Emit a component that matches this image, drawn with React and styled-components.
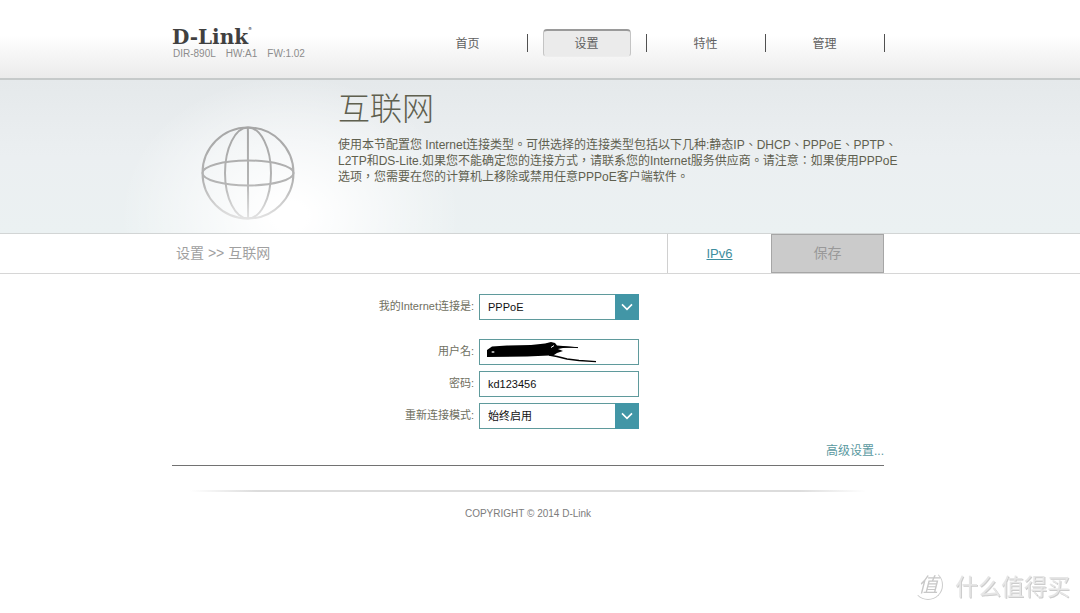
import { useState } from 'react'
import styled, { createGlobalStyle } from 'styled-components'

function Internet() {
  const [connection, setConnection] = useState('PPPoE')
  const [reconnect, setReconnect] = useState('始终启用')
  const [username, setUsername] = useState('')
  const [password, setPassword] = useState('kd123456')
  return (
    <>
      <GlobalStyle />
      <Header>
        <Inner>
          <HeaderRow>
            <Brand>
              <Logo href="#">
                D-Link<Reg>®</Reg>
              </Logo>
              <Version>
                <span>DIR-890L</span>
                <span>HW:A1</span>
                <span>FW:1.02</span>
              </Version>
            </Brand>
            <Nav>
              <NavItem>
                <NavLink href="#home">首页</NavLink>
              </NavItem>
              <NavItem>
                <NavLink href="#settings" $active>
                  设置
                </NavLink>
              </NavItem>
              <NavItem>
                <NavLink href="#features">特性</NavLink>
              </NavItem>
              <NavItem>
                <NavLink href="#management">管理</NavLink>
              </NavItem>
            </Nav>
          </HeaderRow>
        </Inner>
      </Header>
      <Hero>
        <Inner>
          <HeroRow>
            <GlobeBox>
              <Globe />
            </GlobeBox>
            <Intro>
              <Title>互联网</Title>
              <Description>
                使用本节配置您 Internet连接类型。可供选择的连接类型包括以下几种:静态IP、DHCP、PPPoE、PPTP、L2TP和DS-Lite.如果您不能确定您的连接方式，请联系您的Internet服务供应商。请注意：如果使用PPPoE选项，您需要在您的计算机上移除或禁用任意PPPoE客户端软件。
              </Description>
            </Intro>
          </HeroRow>
        </Inner>
      </Hero>
      <Bar>
        <Inner>
          <BarRow>
            <Crumbs>设置 &gt;&gt; 互联网</Crumbs>
            <Ipv6Cell>
              <Ipv6Link href="#ipv6">IPv6</Ipv6Link>
            </Ipv6Cell>
            <SaveButton type="button" disabled>
              保存
            </SaveButton>
          </BarRow>
        </Inner>
      </Bar>
      <Main>
        <Inner>
          <Form>
            <Field $last>
              <Label htmlFor="connection">我的Internet连接是:</Label>
              <SelectBox>
                <Select id="connection" value={connection} onChange={(e) => setConnection(e.target.value)}>
                  <option>PPPoE</option>
                </Select>
                <Arrow />
              </SelectBox>
            </Field>
            <Field>
              <Label htmlFor="username">用户名:</Label>
              <InputBox>
                <Input id="username" value={username} onChange={(e) => setUsername(e.target.value)} />
                <Scribble />
              </InputBox>
            </Field>
            <Field>
              <Label htmlFor="password">密码:</Label>
              <Input id="password" value={password} onChange={(e) => setPassword(e.target.value)} />
            </Field>
            <Field>
              <Label htmlFor="reconnect">重新连接模式:</Label>
              <SelectBox>
                <Select id="reconnect" value={reconnect} onChange={(e) => setReconnect(e.target.value)}>
                  <option>始终启用</option>
                </Select>
                <Arrow />
              </SelectBox>
            </Field>
            <Advanced>
              <AdvancedLink href="#advanced">高级设置...</AdvancedLink>
            </Advanced>
          </Form>
          <FooterLine />
          <Copyright>COPYRIGHT © 2014 D-Link</Copyright>
        </Inner>
      </Main>
      <Watermark>
        <Stamp>值</Stamp>
        <span>什么值得买</span>
      </Watermark>
    </>
  )
}

const Globe = () => (
  <svg width="94" height="94" viewBox="0 0 94 94" fill="none" stroke="url(#fade)" strokeWidth="2">
    <defs>
      <linearGradient id="fade" gradientUnits="userSpaceOnUse" x1="0" y1="0" x2="0" y2="94">
        <stop offset="0" stopColor="#a6a6a6" />
        <stop offset="0.6" stopColor="#b4b4b4" />
        <stop offset="1" stopColor="#e4e4e4" />
      </linearGradient>
    </defs>
    <circle cx="47" cy="47" r="45.5" />
    <ellipse cx="47" cy="47" rx="23" ry="45.5" />
    <ellipse cx="47" cy="47" rx="45.5" ry="12.5" />
    <path d="M46.9 1.5L47.1 92.5" />
  </svg>
)

const Arrow = () => (
  <ArrowBox>
    <svg width="12" height="8" viewBox="0 0 12 8" fill="none" stroke="#fff" strokeWidth="1.6">
      <path d="M1 1.4L6 6.4L11 1.4" />
    </svg>
  </ArrowBox>
)

const Scribble = () => (
  <ScribbleSvg width="112" height="22" viewBox="0 0 112 22">
    <path d="M0 8L5 4.5L20 3.5L44 3L58 1.5L64 0L68 1L70 3.5L76 4L90 5.3L76 6L71 7L76 9L70 11L67 13L62 13.5L40 14.5L0 15Z" />
    <path d="M69 4.5L91 5.6" fill="none" stroke="#000" strokeWidth="1" />
    <path d="M62 13L70 14.5L80 17L92 18.5L109 19.6" fill="none" stroke="#000" strokeWidth="1.4" />
    <ellipse cx="6" cy="10" rx="1.6" ry="0.8" fill="#fff" />
    <path d="M64 5.5L67 3.6" stroke="#fff" strokeWidth="1" />
  </ScribbleSvg>
)

const GlobalStyle = createGlobalStyle`
  body {
    margin: 0;
    background: #ffffff;
    font-family: 'Liberation Sans', 'Noto Sans CJK TC', sans-serif;
    font-size: 12px;
    line-height: 16px;
    color: #5f604f;
  }
`
const Inner = styled.div`
  max-width: 712px;
  margin: 0 auto;
`
const Header = styled.header`
  box-sizing: border-box;
  min-height: 80px;
  padding-right: 24px;
  background: linear-gradient(#ffffff 45%, #ebebeb);
  border-bottom: 2px solid #c6caca;
`
const HeaderRow = styled.div`
  display: flex;
  justify-content: space-between;
  padding-top: 27px;
`
const Brand = styled.div`
  display: flex;
  flex-direction: column;
`
const Logo = styled.a`
  font-family: 'DejaVu Serif', serif;
  font-size: 20px;
  font-weight: bold;
  line-height: 20px;
  color: #404040;
  text-decoration: none;
`
const Reg = styled.sup`
  font-size: 4px;
  line-height: 4px;
  vertical-align: top;
`
const Version = styled.div`
  display: flex;
  gap: 10px;
  padding-left: 1px;
  font-size: 10px;
  line-height: 14px;
  color: #8c8c8c;
`
const Nav = styled.nav`
  display: flex;
  padding-top: 2px;
`
const NavItem = styled.div`
  width: 119px;
  display: flex;
  align-items: center;
  justify-content: center;
  height: 28px;

  &::after {
    content: '';
    width: 1px;
    height: 18px;
    margin-left: 15px;
    margin-right: -1px;
    background: #505050;
  }
`
const NavLink = styled.a`
  box-sizing: border-box;
  width: 88px;
  height: 28px;
  margin-left: 15px;
  line-height: 26px;
  border-radius: 4px;
  border: 1px solid ${(props) => (props.$active ? '#c4c4c4' : 'transparent')};
  border-top: 2px solid ${(props) => (props.$active ? '#9a9a9a' : 'transparent')};
  border-bottom-color: ${(props) => (props.$active ? '#ededed' : 'transparent')};
  background: ${(props) => (props.$active ? '#ebebeb' : 'none')};
  color: #606060;
  text-align: center;
  text-decoration: none;
`
const Hero = styled.section`
  padding-right: 24px;
  background:
    radial-gradient(ellipse 170px 140px at calc(50% - 250px) 136px, #ffffff 10%, rgba(255, 255, 255, 0) 100%),
    linear-gradient(#e5e9eb, #ebeff1 50%, #ebf1f2);
  border-bottom: 1px solid #d2d5d5;
`
const HeroRow = styled.div`
  display: flex;
  min-height: 153px;
`
const GlobeBox = styled.div`
  flex: none;
  width: 137px;
  padding-top: 46px;
  padding-left: 29px;
`
const Intro = styled.div`
  padding-top: 9px;
`
const Title = styled.h1`
  margin: 0 0 8px;
  font-size: 32px;
  line-height: 40px;
  font-weight: 300;
`
const Description = styled.p`
  margin: 0 -20px 0 0;
`
const Bar = styled.div`
  padding-right: 24px;
  border-bottom: 1px solid #d6d6d6;
`
const BarRow = styled.div`
  display: flex;
  height: 39px;
`
const Crumbs = styled.div`
  flex: 1;
  padding-left: 4px;
  font-size: 14px;
  line-height: 39px;
  color: #a0a0a0;
`
const Ipv6Cell = styled.div`
  box-sizing: border-box;
  width: 104px;
  border-left: 1px solid #d0d0d0;
  text-align: center;
`
const Ipv6Link = styled.a`
  font-size: 13px;
  line-height: 39px;
  color: #3f8e9e;
`
const SaveButton = styled.button`
  width: 113px;
  padding: 0 0 3px;
  border: 1px solid #a6a6a6;
  background: #cbcbcb;
  font-family: inherit;
  font-size: 14px;
  color: #999999;
`
const Main = styled.main`
  padding-right: 24px;
`
const Form = styled.form`
  padding-top: 20px;
  border-bottom: 1px solid #727272;
`
const Field = styled.div`
  display: flex;
  align-items: center;
  margin-bottom: ${(props) => (props.$last ? 19 : 6)}px;
`
const Label = styled.label`
  width: 302px;
  margin-right: 5px;
  padding-bottom: 2px;
  font-size: 11px;
  text-align: right;
  color: #6f705f;
`
const Input = styled.input`
  box-sizing: border-box;
  width: 160px;
  height: 26px;
  padding: 0 8px 1px;
  border: 1px solid #5f9a9c;
  border-radius: 0;
  background: #ffffff;
  font-family: inherit;
  font-size: 11px;
  color: #111111;
`
const InputBox = styled.div`
  position: relative;
  display: flex;
`
const ScribbleSvg = styled.svg`
  position: absolute;
  top: 3px;
  left: 8px;
  pointer-events: none;
`
const SelectBox = styled.div`
  position: relative;
  display: flex;
`
const Select = styled.select`
  appearance: none;
  box-sizing: border-box;
  width: 160px;
  height: 26px;
  padding: 0 28px 1px 8px;
  border: 1px solid #5f9a9c;
  border-radius: 0;
  background: #ffffff;
  font-family: inherit;
  font-size: 11px;
  color: #111111;
`
const ArrowBox = styled.span`
  position: absolute;
  top: 0;
  right: 0;
  bottom: 0;
  width: 24px;
  display: flex;
  align-items: center;
  justify-content: center;
  background: #4296a6;
  pointer-events: none;
`
const Advanced = styled.div`
  padding-top: 8px;
  padding-bottom: 6px;
  text-align: right;
`
const AdvancedLink = styled.a`
  color: #5a999f;
  text-decoration: none;
`
const FooterLine = styled.div`
  height: 2px;
  margin: 24px 18px 0;
  background: linear-gradient(90deg, transparent, #dcdcdc 10%, #dcdcdc 90%, transparent);
`
const Copyright = styled.footer`
  padding-top: 14px;
  font-size: 10px;
  text-align: center;
  color: #7c7c7c;
`
const Watermark = styled.div`
  position: fixed;
  right: 10px;
  bottom: 12px;
  display: flex;
  align-items: center;
  gap: 12px;
  font-family: 'Noto Sans CJK SC', sans-serif;
  font-size: 23px;
  line-height: 32px;
  color: #e6e6e6;
  text-shadow: 1px 1px 0 #cccccc;
`
const Stamp = styled.span`
  width: 28px;
  height: 28px;
  border: 1px solid #cccccc;
  border-left-color: transparent;
  border-top-color: transparent;
  border-radius: 50%;
  font-size: 20px;
  font-style: italic;
  line-height: 25px;
  text-align: center;
  color: #c8c8c8;
  text-shadow: none;
`

export default Internet
